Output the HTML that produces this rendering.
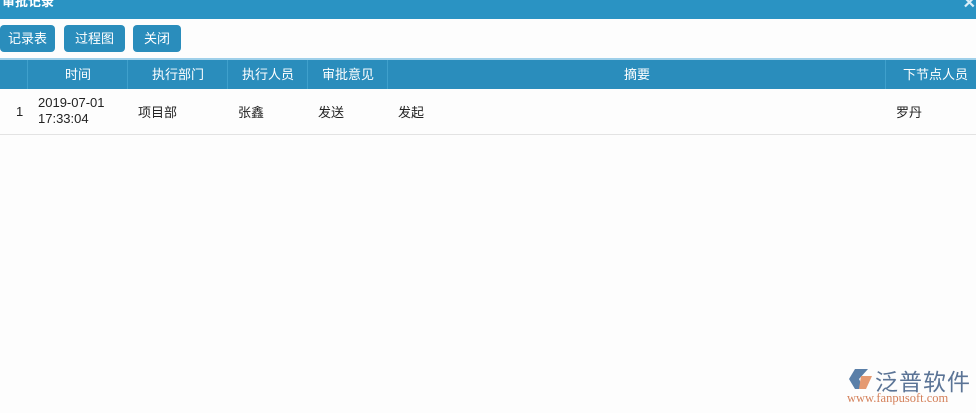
<!DOCTYPE html>
<html><head><meta charset="utf-8"><style>
body{margin:0;width:976px;height:413px;background:#fdfdfd;font-family:"Liberation Sans","Noto Sans CJK SC",sans-serif;position:relative;overflow:hidden;font-size:13px;color:#222}
.title{position:absolute;left:0;top:0;width:976px;height:19px;background:#2a93c3;color:#fff;font-weight:bold;font-size:13px;line-height:4px;padding-left:2px;overflow:hidden}
.x{position:absolute;right:2px;top:-4px;color:#dbeef8;font-size:16px;line-height:16px}
.btn{position:absolute;top:25px;height:27px;background:#2a8dbc;color:#fff;border-radius:4px;line-height:27px;text-align:center;font-size:13px}
.hline{position:absolute;left:0;top:58px;width:976px;height:2px;background:#9fd0ea}
.head{position:absolute;left:0;top:60px;width:976px;height:29px;background:#2a8dbc;color:#fff}
.head div{position:absolute;top:0;height:29px;line-height:29px;text-align:center;border-left:1px solid #3fa0cc}
.row{position:absolute;top:89px;left:0;width:976px;height:45px;border-bottom:1px solid #e3e3e3}
.row div{position:absolute}
</style></head><body>
<div class="title">审批记录<span class="x">✕</span></div>
<div class="btn" style="left:0;width:55px">记录表</div>
<div class="btn" style="left:64px;width:61px">过程图</div>
<div class="btn" style="left:133px;width:48px">关闭</div>
<div class="hline"></div>
<div class="head">
<div style="left:27px;width:100px">时间</div>
<div style="left:127px;width:100px">执行部门</div>
<div style="left:227px;width:80px">执行人员</div>
<div style="left:307px;width:80px">审批意见</div>
<div style="left:387px;width:498px">摘要</div>
<div style="left:885px;width:91px;text-align:right;padding-right:8px;box-sizing:border-box">下节点人员</div>
</div>
<div class="row">
<div style="left:16px;top:15px">1</div>
<div style="left:38px;top:6px;line-height:16px">2019-07-01<br>17:33:04</div>
<div style="left:138px;top:13px">项目部</div>
<div style="left:238px;top:13px">张鑫</div>
<div style="left:318px;top:13px">发送</div>
<div style="left:398px;top:13px">发起</div>
<div style="left:896px;top:13px">罗丹</div>
</div>
<svg style="position:absolute;left:846px;top:368px" width="30" height="22"><path d="M9 1h13l-9 10 5 10H9L3 11z" fill="#5a7fa8"/><path d="M15 8h11l-6 13h-7z" fill="#e59a72"/></svg>
<div style="position:absolute;left:875px;top:363px;font-size:23px;color:#5b7496;letter-spacing:1px">泛普软件</div>
<div style="position:absolute;left:847px;top:391px;font-size:12.5px;color:#d4805a;font-family:'Liberation Serif',serif">www.fanpusoft.com</div>
</body></html>
